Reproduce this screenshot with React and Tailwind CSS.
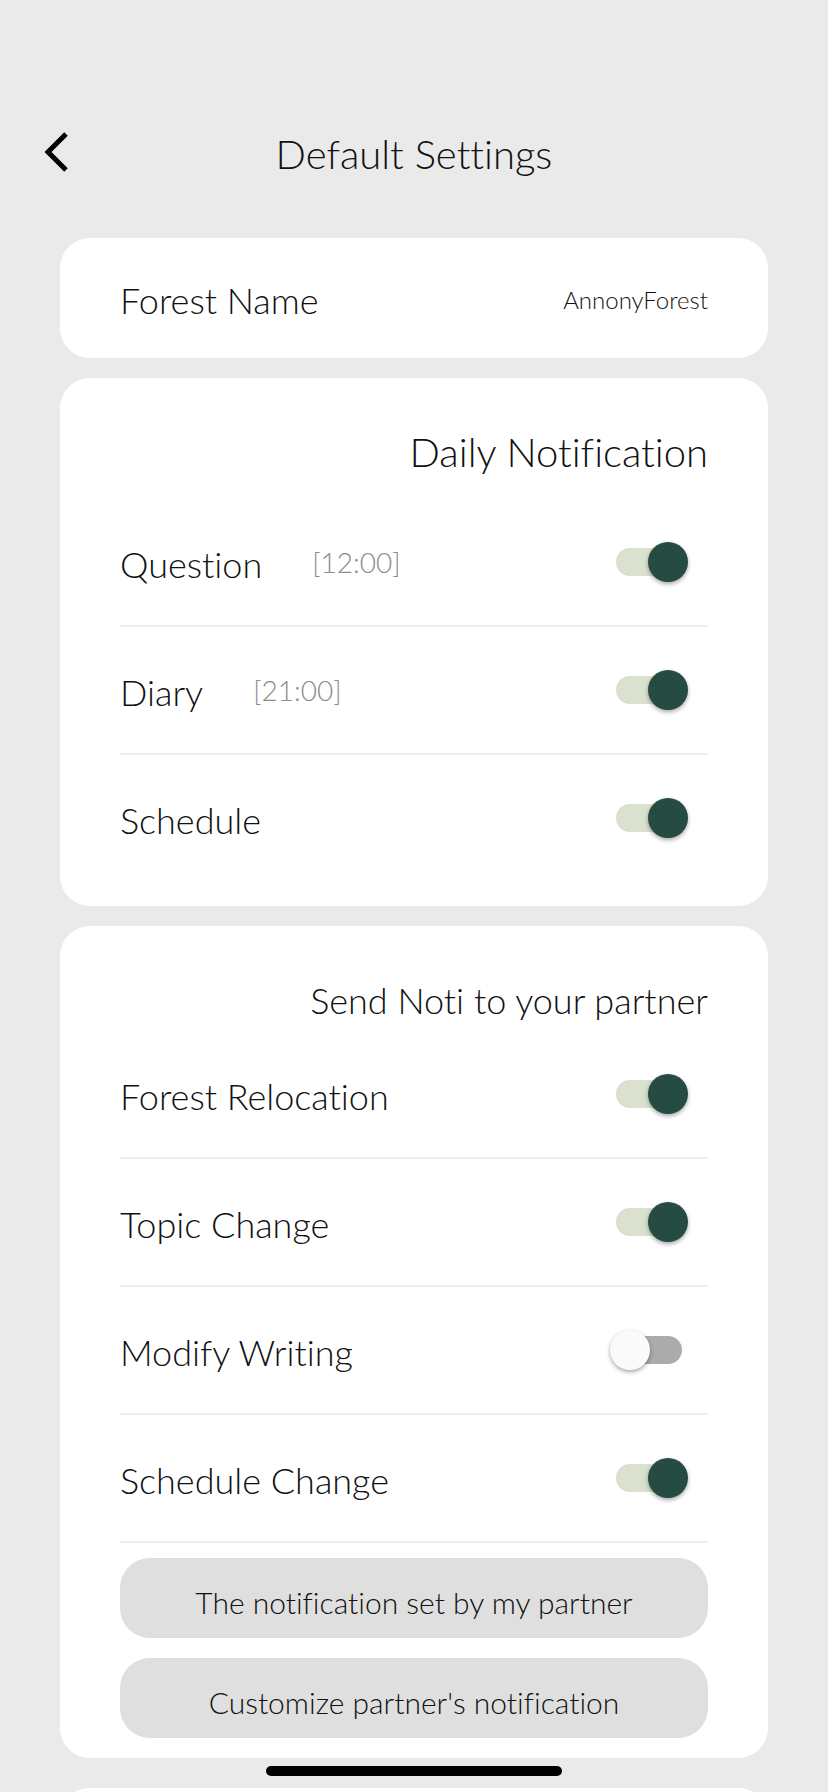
import { useState } from 'react';

const dailyItems = [
  { id: 'question', label: 'Question', time: '[12:00]' },
  { id: 'diary', label: 'Diary', time: '[21:00]' },
  { id: 'schedule', label: 'Schedule' },
];

const partnerItems = [
  { id: 'relocation', label: 'Forest Relocation' },
  { id: 'topic', label: 'Topic Change' },
  { id: 'writing', label: 'Modify Writing' },
  { id: 'scheduleChange', label: 'Schedule Change' },
];

function Toggle({ id, checked, onChange }) {
  return (
    <span className="relative mr-5 flex h-10 w-[78px] items-center px-1.5">
      <input
        id={id}
        type="checkbox"
        role="switch"
        checked={checked}
        onChange={onChange}
        className="peer h-7 w-full cursor-pointer appearance-none rounded-full bg-[#ababab] checked:bg-[#dbe1cf]"
      />
      <span className="pointer-events-none absolute left-0 top-0 h-10 w-10 rounded-full bg-[#fafafa] shadow-[0_2px_4px_rgba(0,0,0,0.35)] peer-checked:left-auto peer-checked:right-0 peer-checked:bg-[#264b43]" />
    </span>
  );
}

function SettingRow({ item, checked, onToggle }) {
  return (
    <div className="flex items-center py-[41px]">
      <label htmlFor={item.id} className="pt-1 text-[36px] leading-10">{item.label}</label>
      {item.time && (
        <button type="button" className="ml-[50px] text-[28px] leading-10 text-[#8c8c8c]">{item.time}</button>
      )}
      <div className="ml-auto">
        <Toggle id={item.id} checked={checked} onChange={() => onToggle(item.id)} />
      </div>
    </div>
  );
}

function Card({ className, children }) {
  return <section className={`rounded-[30px] bg-white px-[60px] ${className}`}>{children}</section>;
}

function WideButton({ children }) {
  return (
    <button type="button" className="rounded-[30px] bg-[#dfdfdf] pb-4 pt-6 text-[30px] leading-10 [font-variant-ligatures:none]">
      {children}
    </button>
  );
}

export default function App() {
  const [enabled, setEnabled] = useState({
    question: true,
    diary: true,
    schedule: true,
    relocation: true,
    topic: true,
    writing: false,
    scheduleChange: true,
  });

  const toggle = id => setEnabled(prev => ({ ...prev, [id]: !prev[id] }));

  return (
    <div className="relative h-screen overflow-hidden bg-[#eaeaea] px-[60px] font-['Lato','Open_Sans',sans-serif] font-light text-[#111111] [font-variant-ligatures:none]">
      {/* Header */}
      <header className="-mx-[60px] grid grid-cols-[112px_1fr_112px] items-center pb-[58px] pt-[124px]">
        <button type="button" aria-label="Back" className="flex h-12 items-center pl-11">
          <svg width="24" height="40" viewBox="0 0 24 40" fill="none" stroke="#000" strokeWidth="5">
            <path d="M22 2 L4 20 L22 38" />
          </svg>
        </button>
        <h1 className="pt-1 text-center text-[40px] leading-[52px]">Default Settings</h1>
      </header>

      <main className="flex flex-col gap-5">
        <Card className="flex items-center justify-between py-[38px]">
          <h2 className="pt-1 text-[36px] leading-10">Forest Name</h2>
          <p className="pt-1 text-[24px] leading-10">AnnonyForest</p>
        </Card>

        {/* Daily */}
        <Card className="pb-[25px]">
          <h2 className="pb-[25px] pt-[52px] text-right text-[40px] leading-[44px]">Daily Notification</h2>
          <div className="divide-y-2 divide-[#eeeeee]">
            {dailyItems.map(item => (
              <SettingRow key={item.id} item={item} checked={enabled[item.id]} onToggle={toggle} />
            ))}
          </div>
        </Card>

        {/* Partner */}
        <Card className="pb-5">
          <h2 className="pb-[9px] pt-[52px] text-right text-[36px] leading-[44px]">Send Noti to your partner</h2>
          <div className="divide-y-2 divide-[#eeeeee] border-b-2 border-[#eeeeee]">
            {partnerItems.map(item => (
              <SettingRow key={item.id} item={item} checked={enabled[item.id]} onToggle={toggle} />
            ))}
          </div>
          <div className="flex flex-col gap-5 pt-[15px]">
            <WideButton>The notification set by my partner</WideButton>
            <WideButton>Customize partner's notification</WideButton>
          </div>
        </Card>

        <Card className="mt-2.5 h-[120px]" />
      </main>

      {/* Home indicator */}
      <div className="absolute bottom-4 left-1/2 h-2.5 w-[296px] -translate-x-1/2 rounded-full bg-black" />
    </div>
  );
}
